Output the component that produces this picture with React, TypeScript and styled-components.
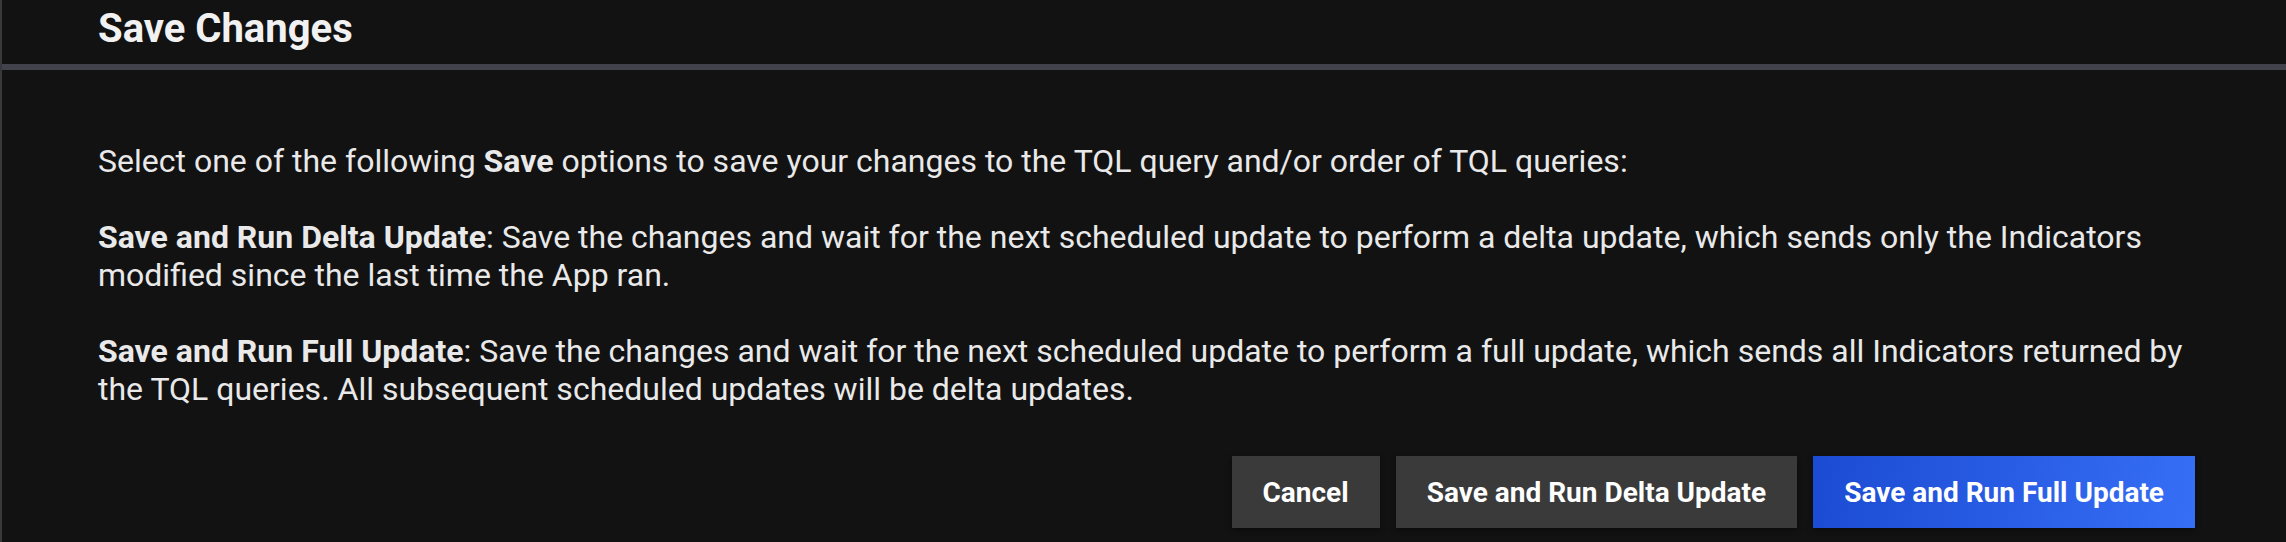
import React from "react";
import styled, { createGlobalStyle } from "styled-components";

const GlobalStyle = createGlobalStyle`
  html, body {
    margin: 0;
    padding: 0;
    background: #121212;
  }
  body {
    font-family: Roboto, "Liberation Sans", Arial, sans-serif;
  }
  * { box-sizing: border-box; }
`;

const Dialog = styled.div`
  width: 2286px;
  height: 542px;
  background: #121212;
  border-left: 2px solid #38383d;
  display: flex;
  flex-direction: column;
  overflow: hidden;
`;

const Header = styled.div`
  height: 70px;
  display: flex;
  align-items: center;
  padding: 0 0 6px 96px;
  border-bottom: 6px solid #41424b;
`;

const Title = styled.h1`
  margin: 0;
  font-size: 40px;
  line-height: 48px;
  font-weight: 700;
  color: #f1f1f1;
`;

const Body = styled.div`
  padding: 72px 91px 0 96px;
  display: flex;
  flex-direction: column;
`;

const Paragraph = styled.p`
  margin: 0 0 38px 0;
  font-size: 32px;
  line-height: 38px;
  color: #e9e9e9;
  &:last-of-type { margin-bottom: 0; }
  strong { font-weight: 700; }
`;

const Actions = styled.div`
  margin-top: 48px;
  display: flex;
  justify-content: flex-end;
  gap: 16px;
`;

const Button = styled.button<{ $primary?: boolean }>`
  height: 72px;
  padding: 0 31px;
  border: none;
  border-radius: 0;
  font-family: Roboto, "Liberation Sans", Arial, sans-serif;
  font-size: 28px;
  font-weight: 700;
  color: #ffffff;
  background: ${(p) =>
    p.$primary ? "linear-gradient(100deg, #1b4bd2 0%, #2a5ee6 55%, #366ff6 100%)" : "#3a3a3a"};
  box-shadow: 0 2px 6px rgba(0, 0, 0, 0.45);
  cursor: pointer;
`;

export default function App() {
  return (
    <>
      <GlobalStyle />
      <Dialog>
        <Header>
          <Title>Save Changes</Title>
        </Header>
        <Body>
          <Paragraph>
            Select one of the following <strong>Save</strong> options to save your changes to the TQL query and/or order of TQL queries:
          </Paragraph>
          <Paragraph>
            <strong>Save and Run Delta Update</strong>: Save the changes and wait for the next scheduled update to perform a delta update, which sends only the Indicators modified since the last time the App ran.
          </Paragraph>
          <Paragraph>
            <strong>Save and Run Full Update</strong>: Save the changes and wait for the next scheduled update to perform a full update, which sends all Indicators returned by the TQL queries. All subsequent scheduled updates will be delta updates.
          </Paragraph>
          <Actions>
            <Button>Cancel</Button>
            <Button>Save and Run Delta Update</Button>
            <Button $primary>Save and Run Full Update</Button>
          </Actions>
        </Body>
      </Dialog>
    </>
  );
}
